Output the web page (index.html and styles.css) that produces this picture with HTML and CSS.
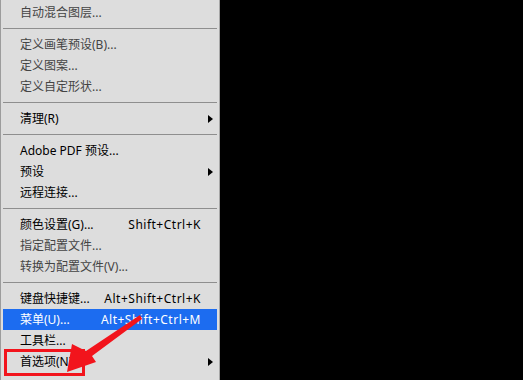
FILE: index.html
```html
<!DOCTYPE html>
<html>
<head>
  <title>编辑菜单</title>
  <meta charset="utf-8">
  <link rel="stylesheet" href="styles.css">
</head>
<body>
  <div class="menu">
    <div class="item off"><span>自动混合图层...</span></div>
    <div class="sep"></div>
    <div class="item off"><span>定义画笔预设(B)...</span></div>
    <div class="item off"><span>定义图案...</span></div>
    <div class="item off"><span>定义自定形状...</span></div>
    <div class="sep"></div>
    <div class="item"><span>清理(R)</span><span></span><i class="arrow"></i></div>
    <div class="sep"></div>
    <div class="item"><span>Adobe PDF 预设...</span></div>
    <div class="item"><span>预设</span><span></span><i class="arrow"></i></div>
    <div class="item"><span>远程连接...</span></div>
    <div class="sep"></div>
    <div class="item"><span>颜色设置(G)...</span><span class="key">Shift+Ctrl+K</span></div>
    <div class="item off"><span>指定配置文件...</span></div>
    <div class="item off"><span>转换为配置文件(V)...</span></div>
    <div class="sep"></div>
    <div class="item"><span>键盘快捷键...</span><span class="key">Alt+Shift+Ctrl+K</span></div>
    <div class="item active"><span>菜单(U)...</span><span class="key">Alt+Shift+Ctrl+M</span></div>
    <div class="item"><span>工具栏...</span></div>
    <div class="item"><span>首选项(N)</span><span></span><i class="arrow"></i></div>
  </div>

  <svg class="markup" width="523" height="380" viewBox="0 0 523 380">
    <rect x="5.5" y="350.5" width="78" height="24" fill="none" stroke="#f2141c" stroke-width="3"/>
    <polygon fill="#f2141c" points="140,315 142,319 92,356 96,362 67,372 72,344 86,351"/>
  </svg>
</body>
</html>
```

FILE: styles.css
```css
body {
  margin: 0;
  background-color: black;
  font-family: "Noto Sans", "Noto Sans CJK SC", sans-serif;
  font-size: 12px;
  height: 380px;
  overflow: hidden;
}
.menu {
  width: 214px;
  height: 376px;
  padding: 2px;
  background-color: #dddddd;
  border-left: 1px solid #9c9c9c;
  border-right: 1px solid #a6a6a6;
}
.item {
  display: grid;
  grid-template-columns: 1fr auto 5px;
  column-gap: 7px;
  align-items: center;
  height: 21px;
  line-height: 21px;
  padding: 0 4px 0 17px;
  color: #000;
  white-space: nowrap;
}
.item.off {
  color: #444;
}
.item.active {
  background-color: #1c6cf0;
  color: white;
}
.key {
  letter-spacing: 0.5px;
}
.arrow {
  width: 0;
  height: 0;
  border-left: 5px solid black;
  border-top: 4.5px solid transparent;
  border-bottom: 4.5px solid transparent;
}
.sep {
  height: 1px;
  margin: 5px 0;
  background-color: #8e8e8e;
}
.markup {
  position: absolute;
  top: 0;
  left: 0;
  pointer-events: none;
}
```
